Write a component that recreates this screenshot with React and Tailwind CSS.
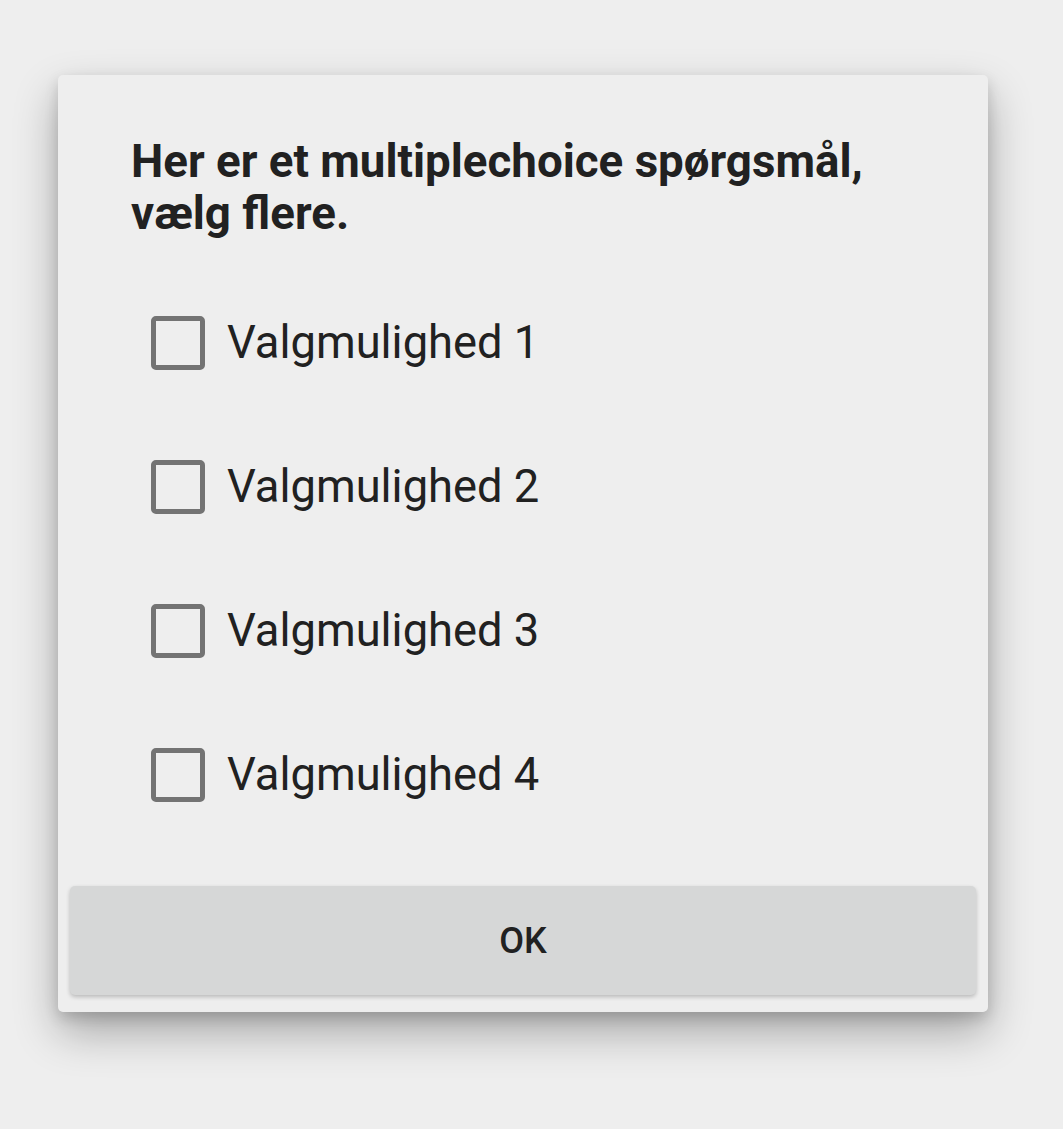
export default function App() {
  const options = ["Valgmulighed 1", "Valgmulighed 2", "Valgmulighed 3", "Valgmulighed 4"];

  return (
    <div className="min-h-[1129px] w-full bg-[#eeeeee] pt-[75px] pl-[58px]" style={{ fontFamily: "Roboto, 'Liberation Sans', sans-serif" }}>
      <div className="w-[930px] h-[937px] bg-[#eeeeee] rounded-[5px] shadow-[0_20px_44px_rgba(0,0,0,0.3),0_6px_14px_rgba(0,0,0,0.15)] flex flex-col">
        <h1 className="pt-[61px] px-[73px] text-[45.7px] leading-[52px] font-bold text-[#212121]">
          Her er et multiplechoice spørgsmål, vælg flere.
        </h1>

        <div className="mt-[31px] pl-[93px] flex flex-col">
          {options.map((o) => (
            <label key={o} className="h-[144px] flex items-center gap-[22px] cursor-pointer">
              <span className="w-[54px] h-[54px] rounded-[5px] border-[5px] border-[#737373] shrink-0"></span>
              <span className="text-[45.3px] text-[#212121]">{o}</span>
            </label>
          ))}
        </div>

        <div className="mt-auto px-[12px] pb-[17px]">
          <button className="w-full h-[109px] bg-[#d6d7d7] rounded-[5px] shadow-[0_2px_4px_rgba(0,0,0,0.22)] text-[36px] font-medium text-[#212121]">
            OK
          </button>
        </div>
      </div>
    </div>
  );
}
